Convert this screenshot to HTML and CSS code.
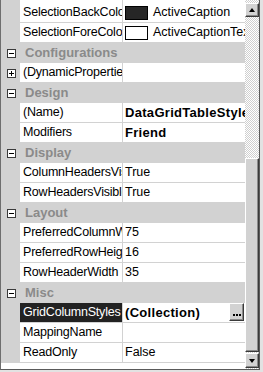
FILE: index.html
```html
<!DOCTYPE html>
<html>
<head>
<meta charset="utf-8">
<link rel="stylesheet" href="styles.css">
</head>
<body>
<div class="outer">
  <div class="frame">
    <div class="grid">
      <div class="row first">
        <div class="m"></div>
        <div class="n">SelectionBackColor</div>
        <div class="v"><span class="swatch dark"></span><span class="vt">ActiveCaption</span></div>
      </div>
      <div class="row">
        <div class="m"></div>
        <div class="n">SelectionForeColor</div>
        <div class="v"><span class="swatch"></span><span class="vt">ActiveCaptionText</span></div>
      </div>
      <div class="row cat">
        <div class="m"><span class="box"><span class="hbar"></span></span></div>
        <div class="ct">Configurations</div>
      </div>
      <div class="row">
        <div class="m"><span class="box"><span class="hbar"></span><span class="vbar"></span></span></div>
        <div class="n">(DynamicProperties)</div>
        <div class="v"></div>
      </div>
      <div class="row cat">
        <div class="m"><span class="box"><span class="hbar"></span></span></div>
        <div class="ct">Design</div>
      </div>
      <div class="row">
        <div class="m"></div>
        <div class="n">(Name)</div>
        <div class="v b">DataGridTableStyle1</div>
      </div>
      <div class="row">
        <div class="m"></div>
        <div class="n">Modifiers</div>
        <div class="v b">Friend</div>
      </div>
      <div class="row cat">
        <div class="m"><span class="box"><span class="hbar"></span></span></div>
        <div class="ct">Display</div>
      </div>
      <div class="row">
        <div class="m"></div>
        <div class="n">ColumnHeadersVisible</div>
        <div class="v">True</div>
      </div>
      <div class="row">
        <div class="m"></div>
        <div class="n">RowHeadersVisible</div>
        <div class="v">True</div>
      </div>
      <div class="row cat">
        <div class="m"><span class="box"><span class="hbar"></span></span></div>
        <div class="ct">Layout</div>
      </div>
      <div class="row">
        <div class="m"></div>
        <div class="n">PreferredColumnWidth</div>
        <div class="v">75</div>
      </div>
      <div class="row">
        <div class="m"></div>
        <div class="n">PreferredRowHeight</div>
        <div class="v">16</div>
      </div>
      <div class="row">
        <div class="m"></div>
        <div class="n">RowHeaderWidth</div>
        <div class="v">35</div>
      </div>
      <div class="row cat">
        <div class="m"><span class="box"><span class="hbar"></span></span></div>
        <div class="ct">Misc</div>
      </div>
      <div class="row">
        <div class="m"></div>
        <div class="n sel">GridColumnStyles</div>
        <div class="v b"><span class="vt">(Collection)</span><span class="dots"><span class="dot"></span></span></div>
      </div>
      <div class="row">
        <div class="m"></div>
        <div class="n">MappingName</div>
        <div class="v"></div>
      </div>
      <div class="row">
        <div class="m"></div>
        <div class="n">ReadOnly</div>
        <div class="v">False</div>
      </div>
    </div>
    <div class="sb">
      <div class="btn"><span class="up"></span></div>
      <div class="track"><div class="thumb"></div></div>
      <div class="btn down-btn"><span class="down"></span></div>
    </div>
  </div>
</div>
</body>
</html>
```

FILE: styles.css
```css
html, body {
  margin: 0;
  padding: 0;
  background: #e2e2e2;
}
body {
  font-family: "Liberation Sans", Arial, sans-serif;
  font-size: 12.5px;
  color: #000;
}
.outer {
  width: 263px;
  height: 372px;
  box-sizing: border-box;
  padding: 0 3px 2px 0;
  background: #e2e2e2;
}
.frame {
  height: 100%;
  box-sizing: border-box;
  border-left: 1px solid #6e6e6e;
  border-right: 1px solid #5a5a5a;
  border-bottom: 1px solid #5a5a5a;
  display: flex;
  background: #fff;
}
.grid {
  width: 244px;
  flex: none;
  display: flex;
  flex-direction: column;
  background: #fff;
  overflow: hidden;
}
.row {
  display: flex;
  height: 20px;
  flex: none;
}
.row.first {
  height: 23px;
}
.m {
  width: 19px;
  flex: none;
  background: #d2d2d2;
  display: flex;
  align-items: center;
  justify-content: center;
}
.n {
  width: 103px;
  flex: none;
  box-sizing: border-box;
  padding-left: 3px;
  border-right: 1px solid #d2d2d2;
  border-bottom: 1px solid #d2d2d2;
  line-height: 19px;
  letter-spacing: -0.2px;
  white-space: nowrap;
  overflow: hidden;
}
.first .n, .first .v {
  padding-top: 3px;
}
.v {
  flex: 1;
  min-width: 0;
  box-sizing: border-box;
  padding-left: 2px;
  border-bottom: 1px solid #d2d2d2;
  line-height: 19px;
  white-space: nowrap;
  overflow: hidden;
  display: flex;
  align-items: flex-start;
}
.b {
  font-weight: bold;
  font-size: 13px;
  letter-spacing: 0.3px;
}
.vt {
  white-space: nowrap;
}
.swatch {
  flex: none;
  width: 23px;
  height: 14px;
  box-sizing: border-box;
  border: 1px solid #000;
  background: #fff;
  margin-top: 3px;
  margin-right: 5px;
}
.swatch.dark {
  background: #262626;
}
.sel {
  background: #222;
  color: #fff;
}
.cat {
  background: #d2d2d2;
}
.ct {
  flex: 1;
  padding-left: 5px;
  line-height: 20px;
  font-size: 13px;
  font-weight: bold;
  color: #8a8a8a;
  white-space: nowrap;
}
.box {
  position: relative;
  width: 9px;
  height: 9px;
  box-sizing: border-box;
  border: 1px solid #3a3a3a;
  background: #fff;
  margin-left: 1px;
}
.hbar {
  position: absolute;
  left: 1px;
  top: 3px;
  width: 5px;
  height: 1px;
  background: #000;
}
.vbar {
  position: absolute;
  left: 3px;
  top: 1px;
  width: 1px;
  height: 5px;
  background: #000;
}
.dots {
  margin-left: auto;
  margin-right: 1px;
  width: 15px;
  height: 18px;
  flex: none;
  box-sizing: border-box;
  background: #d2d2d2;
  border-top: 1px solid #fff;
  border-left: 1px solid #fff;
  border-right: 1px solid #3a3a3a;
  border-bottom: 1px solid #3a3a3a;
  box-shadow: inset -1px -1px 0 #8a8a8a;
  display: flex;
  align-items: flex-end;
  padding: 0 0 4px 3px;
}
.dot {
  width: 2px;
  height: 2px;
  background: #000;
  box-shadow: 3px 0 0 #000, 6px 0 0 #000;
}
.sb {
  width: 14px;
  flex: none;
  display: flex;
  flex-direction: column;
  padding-top: 3px;
  padding-bottom: 1px;
  box-sizing: border-box;
  background: repeating-conic-gradient(#cfcfcf 0 25%, #fff 0 50%) 0 0 / 2px 2px;
}
.btn {
  height: 14px;
  flex: none;
  box-sizing: border-box;
  background: #d2d2d2;
  border-top: 1px solid #fff;
  border-left: 1px solid #fff;
  border-right: 1px solid #3a3a3a;
  border-bottom: 1px solid #3a3a3a;
  box-shadow: inset -1px -1px 0 #8a8a8a;
  display: flex;
  align-items: center;
  justify-content: center;
}
.down-btn {
  height: 15px;
}
.up {
  width: 0;
  height: 0;
  border-left: 3px solid transparent;
  border-right: 3px solid transparent;
  border-bottom: 4px solid #000;
}
.down {
  width: 0;
  height: 0;
  border-left: 3px solid transparent;
  border-right: 3px solid transparent;
  border-top: 4px solid #000;
}
.track {
  flex: 1;
  padding-top: 141px;
  display: flex;
  flex-direction: column;
}
.thumb {
  height: 194px;
  box-sizing: border-box;
  background: #d2d2d2;
  border-top: 1px solid #fff;
  border-left: 1px solid #fff;
  border-right: 1px solid #3a3a3a;
  border-bottom: 1px solid #3a3a3a;
  box-shadow: inset -1px -1px 0 #8a8a8a;
}
```
